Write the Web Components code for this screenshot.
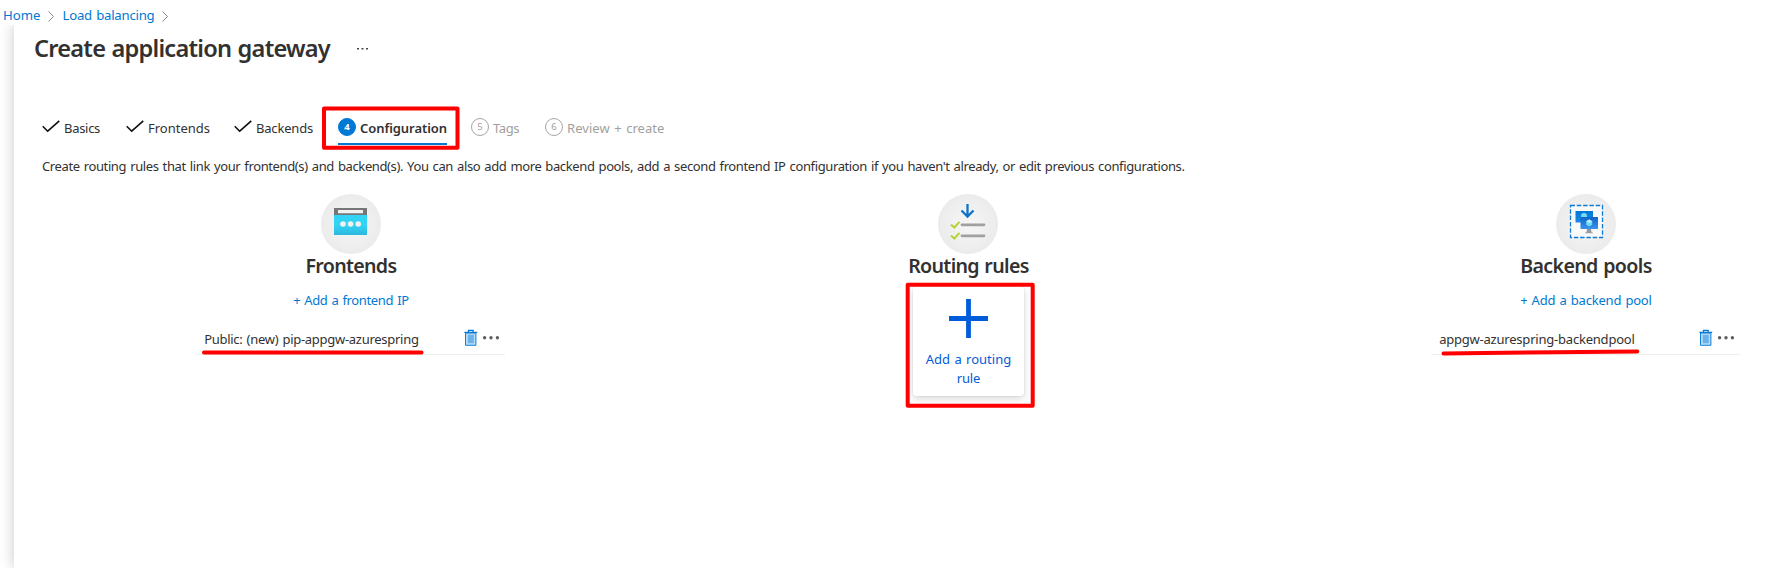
<!DOCTYPE html>
<html lang="en">
<head>
<meta charset="utf-8">
<title>Create application gateway</title>
<style>
html,body{margin:0;height:100%;overflow:hidden;background:#fff}
body{font:13px/20px "Noto Sans","Open Sans",sans-serif;color:#323130}
</style>
</head>
<body>
<gateway-page></gateway-page>
<script>
const define = (name, html, setup) => customElements.define(name, class extends HTMLElement {
  constructor() {
    super();
    const t = document.createElement('template');
    t.innerHTML = html;
    this.attachShadow({ mode: 'open' }).append(t.content.cloneNode(true));
  }
  connectedCallback() { if (setup) setup(this, this.shadowRoot); }
});

/* One line of text whose tracking is adjusted to fill the width in "w". */
define('fit-text', `<style>:host{display:block;flex:none;white-space:pre;word-spacing:1px}span{display:inline-block}</style><span><slot></slot></span>`, (el, root) => {
  const span = root.querySelector('span'), w = +el.getAttribute('w'), n = el.textContent.length;
  el.style.width = w + 'px';
  span.style.letterSpacing = (w - span.getBoundingClientRect().width) / n + 'px';
});

define('crumb-bar', `<style>
:host{display:flex;height:25px;padding:5px 0 0 3px;box-sizing:border-box;color:#0078d4;background:#fff;position:relative;font-size:13.2px}
svg{width:6px;height:11px;margin:6px 9px 0 7px;flex:none}
</style>
<fit-text w="37.5">Home</fit-text><svg viewBox="0 0 6 11"><path d="M.5.5l5 5-5 5" fill="none" stroke="#8a8886"/></svg>
<fit-text w="92">Load balancing</fit-text><svg viewBox="0 0 6 11"><path d="M.5.5l5 5-5 5" fill="none" stroke="#8a8886"/></svg>`);

define('wizard-step', `<style>
:host{display:flex;height:27px;box-sizing:border-box;flex:none}
.m{width:18px;height:18px;margin:0 4px 0 0;flex:none}
.n{border-radius:50%;box-sizing:border-box;border:1px solid #a6a6a6;font:9.5px/16px "Noto Sans",sans-serif;text-align:center}
:host([state=todo]){color:#a19f9d}
:host([state=active]){font-weight:600;border-bottom:2px solid #0078d4}
:host([state=active]) .n{background:#0078d4;border-color:#0078d4;color:#fff;font-weight:700}
</style><span class="m"></span><slot></slot>`, (el, root) => {
  const m = root.querySelector('.m');
  if (el.getAttribute('state') === 'done')
    m.innerHTML = '<svg width="18" height="18" viewBox="0 0 18 18"><path d="M.7 8.2l5 5L17.3 2.8" fill="none" stroke="#111" stroke-width="1.6"/></svg>';
  else { m.classList.add('n'); m.textContent = el.getAttribute('n'); }
});

define('wizard-steps', `<style>:host{display:flex;padding-left:28px;height:38px}
wizard-step:nth-of-type(2){margin-left:26px}wizard-step:nth-of-type(3){margin-left:24px}wizard-step:nth-of-type(4){margin-left:25px}
wizard-step:nth-of-type(5){margin-left:24px}wizard-step:nth-of-type(6){margin-left:26px}</style>
<wizard-step state="done"><fit-text w="36">Basics</fit-text></wizard-step>
<wizard-step state="done"><fit-text w="62">Frontends</fit-text></wizard-step>
<wizard-step state="done"><fit-text w="57">Backends</fit-text></wizard-step>
<wizard-step state="active" n="4"><fit-text w="87">Configuration</fit-text></wizard-step>
<wizard-step state="todo" n="5"><fit-text w="26">Tags</fit-text></wizard-step>
<wizard-step state="todo" n="6"><fit-text w="97.5">Review + create</fit-text></wizard-step>`);

define('config-column', `<style>
:host{display:flex;flex-direction:column;align-items:center;min-width:0}
.c{width:60px;height:60px;border-radius:50%;background:radial-gradient(circle,#f5f5f5 10%,#ededed 60%,#e6e6e6);flex:none}
.h{font-size:19.6px;line-height:24px;font-weight:600;height:22px}
</style><div class="c"><slot name="icon"></slot></div><div class="h"><slot name="title"></slot></div><slot></slot>`);

define('link-text', `<style>:host{display:block;color:#0078d4;margin:14px 0 19px;height:20px}</style><slot></slot>`);

define('resource-row', `<style>
:host{display:flex;width:309px;height:26px;box-sizing:border-box;border-bottom:1px solid #f0efee;padding-left:7.7px}
svg{margin-left:auto;width:41px;height:18px;flex:none}
</style><slot></slot><svg viewBox="0 0 41 18"><path d="M.4 3.3h12.8M4.5 3V1.4h4.6V3" fill="none" stroke="#0078d4" stroke-width="1.3"/><path d="M1.5 4h10.4v12.3H1.5z" fill="#b5dbf7" stroke="#1480d8"/><path d="M3.8 5.8h6v8.4h-6z" fill="#6cb2ea"/><g fill="#605e5c"><circle cx="20.6" cy="8.8" r="1.7"/><circle cx="27" cy="8.8" r="1.7"/><circle cx="33.4" cy="8.8" r="1.7"/></g></svg>`);

define('rule-card', `<style>
:host{display:flex;flex-direction:column;align-items:center;box-sizing:border-box;width:111px;height:109px;margin-top:11px;border-radius:3px;background:#fff;box-shadow:0 3px 8px rgba(0,0,0,.15),0 0 2px rgba(0,0,0,.12);color:#015cda;padding-top:12px;line-height:19px;font-size:13px}
svg{width:39px;height:39px;margin-bottom:12px;flex:none}
</style><svg viewBox="0 0 39 39"><path d="M19.5 0v39M0 19.5h39" stroke="#015cda" stroke-width="4.8"/></svg><fit-text w="85.5">Add a routing</fit-text><fit-text w="23.5">rule</fit-text>`);

/* Hand-drawn highlights lying over the page. */
define('red-marks', `<style>:host{position:absolute;inset:0;pointer-events:none}svg{display:block}</style>
<svg width="1772" height="568" fill="none" stroke="#f00" stroke-width="4" stroke-linejoin="round" stroke-linecap="round">
<rect x="324" y="108.5" width="133.5" height="39.2"/><rect x="907.7" y="284.7" width="125" height="121"/>
<path d="M204 352.5H421.5M1443.5 353.4L1637.3 351.5"/></svg>`);

define('gateway-page', `<style>
:host{display:block;position:relative;width:1772px;height:568px;overflow:hidden}
main{margin-left:14px;height:543px;background:#fff;box-shadow:0 0 14px rgba(0,0,0,.22)}
header{display:flex;height:93px;padding:7px 0 0 20px;box-sizing:border-box}
header svg{width:12px;height:4px;margin:15px 0 0 27px}
.t{font-size:23.6px;line-height:32px;font-weight:600}
.d{padding-left:28px;height:38px}
.g{display:grid;grid-template-columns:repeat(3,617.5px);padding-left:28.2px;width:1852.5px}
</style>
<crumb-bar></crumb-bar>
<main>
<header><fit-text class="t" w="296">Create application gateway</fit-text><svg viewBox="0 0 12 4" fill="#484644"><path d="M0 1h2v1.6H0zM4.5 1h2v1.6h-2zM9 1h2v1.6H9z"/></svg></header>
<wizard-steps></wizard-steps>
<div class="d"><fit-text w="1142.5">Create routing rules that link your frontend(s) and backend(s). You can also add more backend pools, add a second frontend IP configuration if you haven't already, or edit previous configurations.</fit-text></div>
<div class="g">
<config-column>
<svg slot="icon" width="60" height="60" viewBox="0 0 60 60"><defs><linearGradient id="fg" x2="0" y2="1"><stop offset="0" stop-color="#32d4f5"/><stop offset=".5" stop-color="#32d4f5"/><stop offset="1" stop-color="#2bb8df"/></linearGradient></defs><path d="M13 21h33v20H13z" fill="url(#fg)"/><path d="M13 14h33v7H13z" fill="#767676"/><rect x="17" y="16" width="25" height="3.2" rx=".5" fill="#f2f2f2"/><g fill="#f2f2f2"><circle cx="22" cy="30" r="2.8"/><circle cx="29.6" cy="30" r="2.8"/><circle cx="37.2" cy="30" r="2.8"/></g></svg>
<fit-text slot="title" w="91">Frontends</fit-text>
<link-text><fit-text w="115.5">+ Add a frontend IP</fit-text></link-text>
<resource-row><fit-text w="214.5">Public: (new) pip-appgw-azurespring</fit-text></resource-row>
</config-column>
<config-column>
<svg slot="icon" width="60" height="60" viewBox="0 0 60 60" fill="none"><path d="M29.5 10v12M23.5 16.5l6 6 6-6" stroke="#0f74c9" stroke-width="2.3"/><path d="M24 30.8h22M24 41.8h22" stroke="#a0a0a0" stroke-width="2.8" stroke-linecap="round"/><path d="M13 30.5l3.3 3 5.2-5.6M13 41.5l3.3 3 5.2-5.6" stroke="#b4d334" stroke-width="2"/></svg>
<fit-text slot="title" w="120.5">Routing rules</fit-text>
<rule-card></rule-card>
</config-column>
<config-column>
<svg slot="icon" width="60" height="60" viewBox="0 0 60 60"><defs><linearGradient id="bg" x2="0" y2="1"><stop offset="0" stop-color="#0078d4"/><stop offset="1" stop-color="#1a8aee"/></linearGradient><linearGradient id="bh" x2="0" y2="1"><stop offset="0" stop-color="#1264c4"/><stop offset="1" stop-color="#3a92ee"/></linearGradient></defs><rect x="14.5" y="11.5" width="32" height="32" fill="#fafafa" stroke="#0f7dd6" stroke-dasharray="4.5 1.8" stroke-width="1.3"/><rect x="19.5" y="17" width="17.5" height="11.5" fill="url(#bg)"/><circle cx="28" cy="22" r="3" fill="#6fdcf2"/><path d="M31 35h4l.6 3.5H37v.8h-8v-.8h1.4z" fill="#9a9a9a"/><rect x="24.5" y="23" width="17.5" height="12" rx=".5" fill="url(#bh)"/><path d="M33.2 25.6l3 1.7v3.5l-3 1.7-3-1.7v-3.5z" fill="#6fdcf2"/><path d="M33.2 25.6l3 1.7-3 1.7-3-1.7z" fill="#b8f2fb"/></svg>
<fit-text slot="title" w="131.5">Backend pools</fit-text>
<link-text><fit-text w="131.5">+ Add a backend pool</fit-text></link-text>
<resource-row><fit-text w="195.5">appgw-azurespring-backendpool</fit-text></resource-row>
</config-column>
</div>
</main>
<red-marks></red-marks>`);
</script>
</body>
</html>
